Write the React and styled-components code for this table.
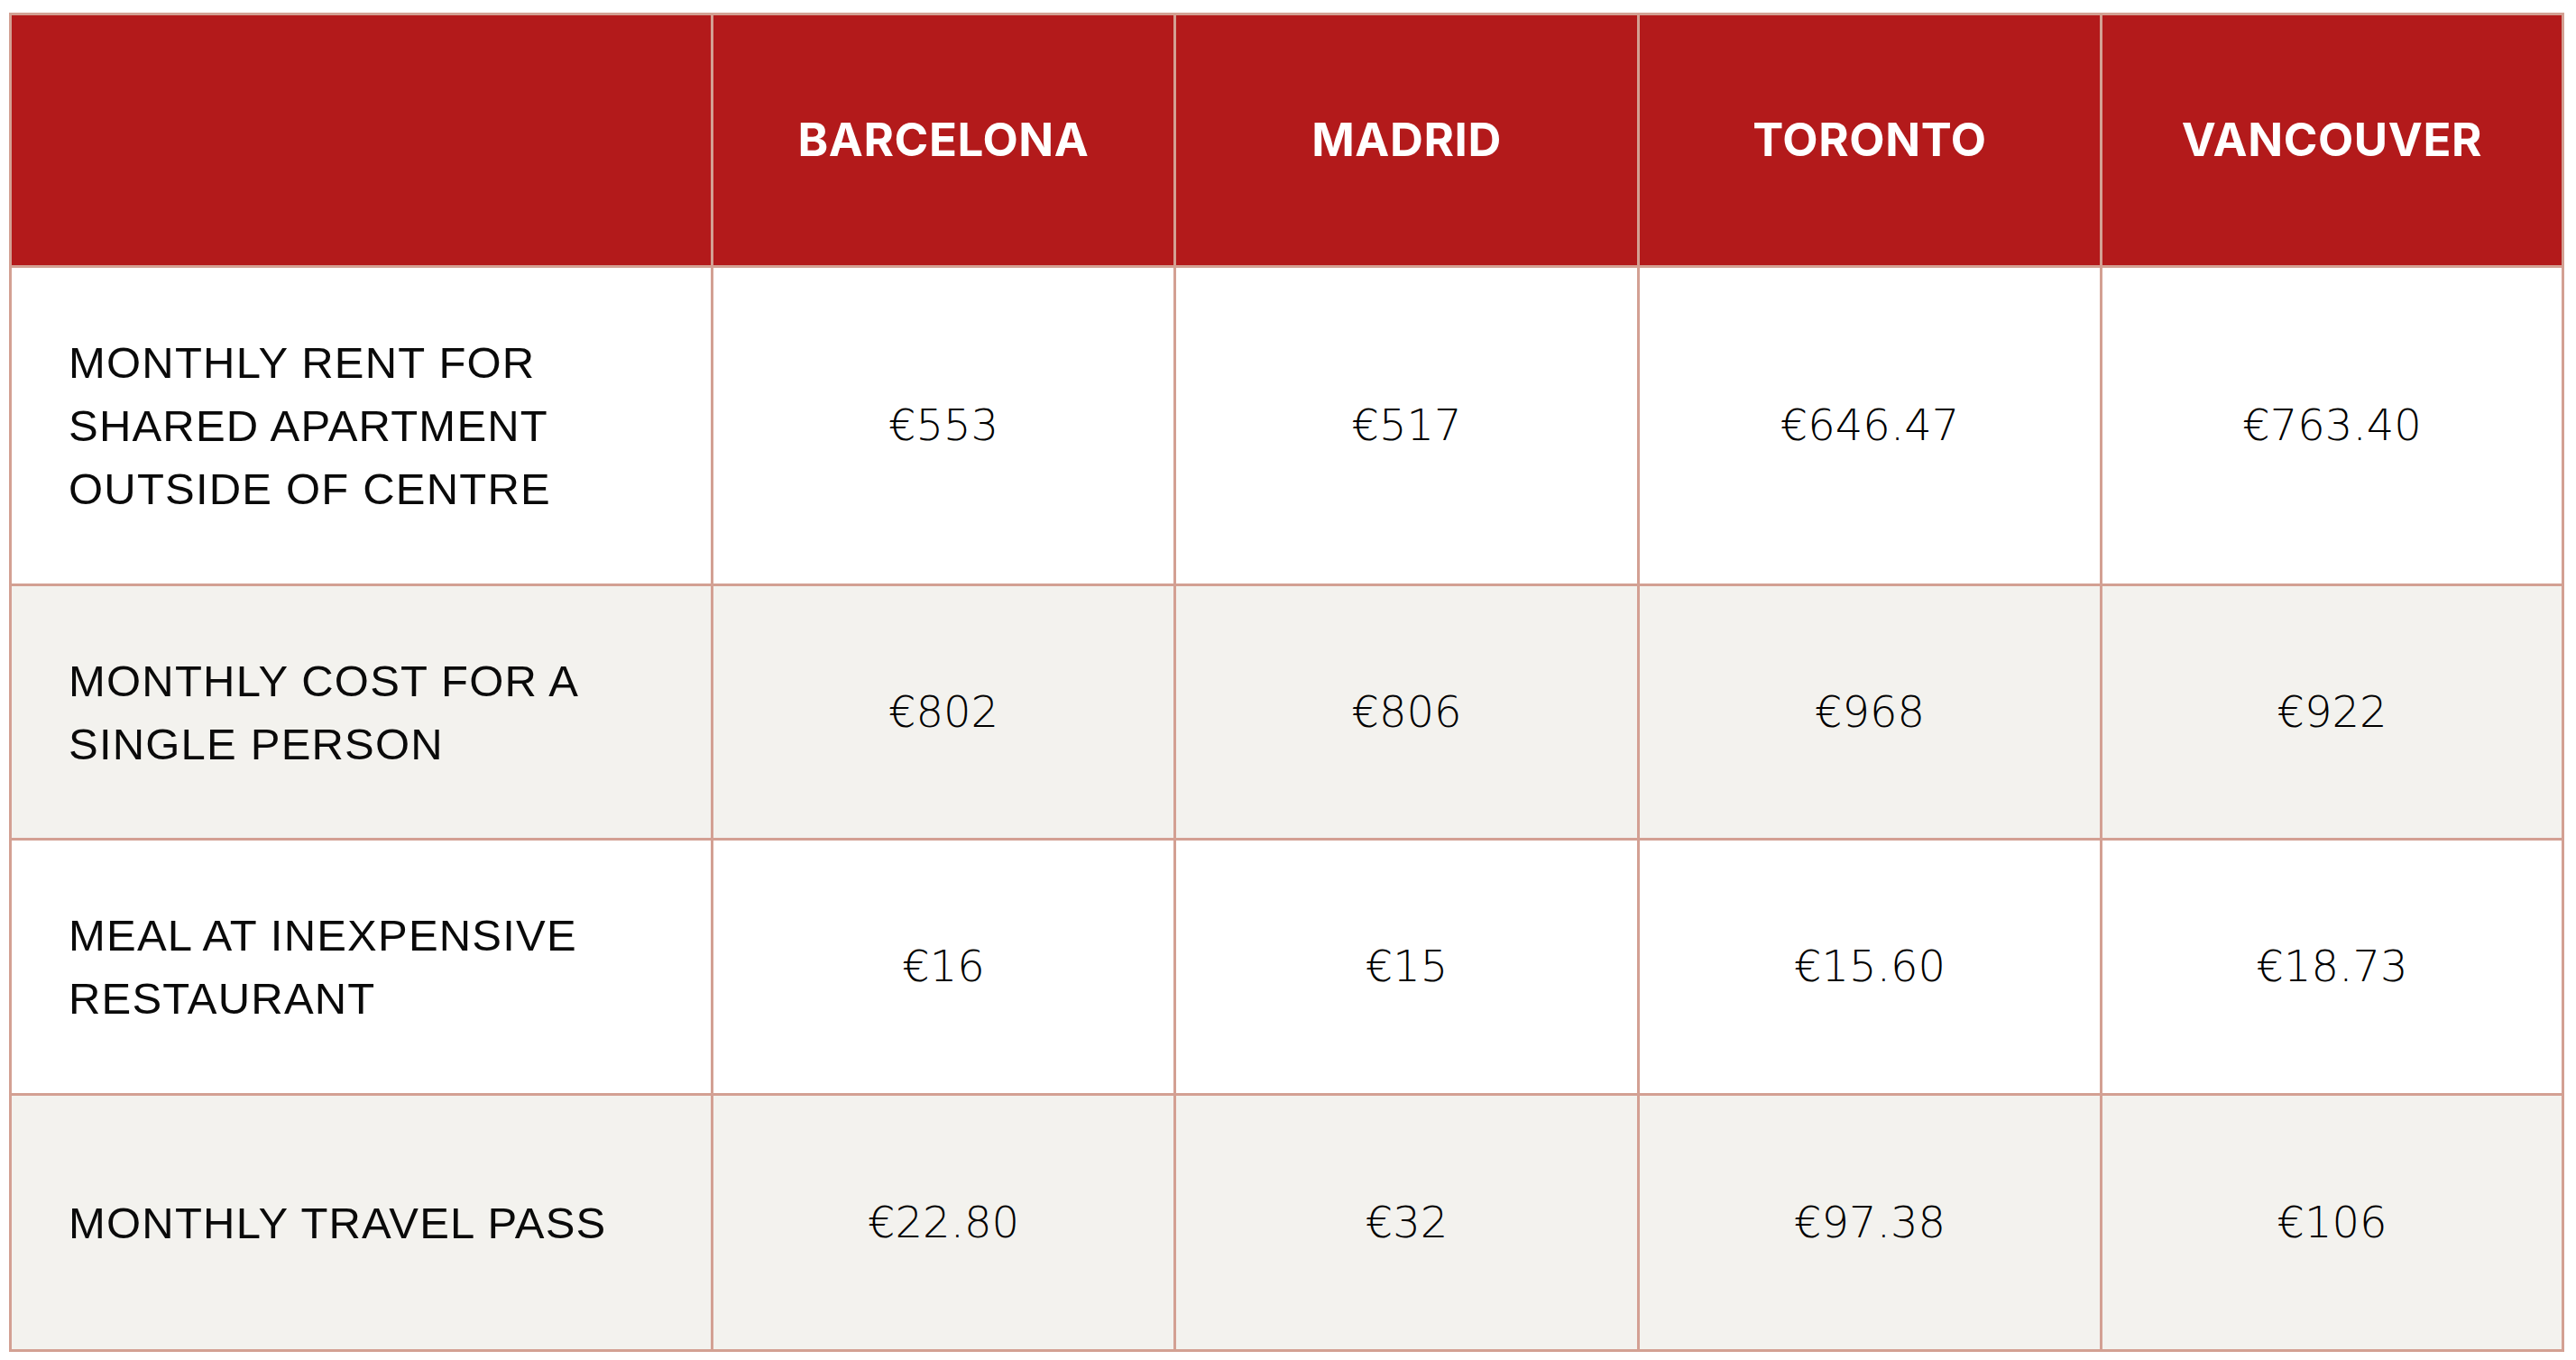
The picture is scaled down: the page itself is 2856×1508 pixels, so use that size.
import React from 'react';
import styled, { createGlobalStyle } from 'styled-components';

const cities = ['BARCELONA', 'MADRID', 'TORONTO', 'VANCOUVER'];

const rows = [
  { label: ['MONTHLY RENT FOR', 'SHARED APARTMENT', 'OUTSIDE OF CENTRE'], values: ['€553', '€517', '€646.47', '€763.40'] },
  { label: ['MONTHLY COST FOR A', 'SINGLE PERSON'], values: ['€802', '€806', '€968', '€922'], shaded: true },
  { label: ['MEAL AT INEXPENSIVE', 'RESTAURANT'], values: ['€16', '€15', '€15.60', '€18.73'] },
  { label: ['MONTHLY TRAVEL PASS'], values: ['€22.80', '€32', '€97.38', '€106'], shaded: true },
];

const GlobalStyle = createGlobalStyle`
  html, body {
    margin: 0;
    padding: 0;
    background: #ffffff;
  }
  body {
    width: 2856px;
    height: 1508px;
    overflow: hidden;
  }
`;

const Page = styled.div`
  padding: 14px 0 0 10px;
`;

const Grid = styled.div`
  display: grid;
  width: 2833px;
  grid-template-columns: 775px 510px 511px 510px 509px;
  grid-template-rows: 277px 350px 279px 280px 281px;
  gap: 3px;
  padding: 3px;
  box-sizing: border-box;
  background: #d3a093;
`;

const HeadCell = styled.div`
  background: #b31a1b;
  color: #ffffff;
  display: flex;
  align-items: center;
  justify-content: center;
  padding-bottom: 3px;
  font-family: Inter, "Liberation Sans", sans-serif;
  font-weight: 700;
  font-size: 51px;
  letter-spacing: 0.6px;
`;

const LabelCell = styled.div`
  background: ${p => (p.$shaded ? '#f3f2ee' : '#ffffff')};
  display: flex;
  align-items: center;
  padding-left: 63px;
  font-family: "Liberation Sans", Arial, sans-serif;
  font-size: 49px;
  line-height: 70px;
  letter-spacing: 1.2px;
  color: #0a0a0a;
`;

const ValueCell = styled.div`
  background: ${p => (p.$shaded ? '#f3f2ee' : '#ffffff')};
  display: flex;
  align-items: center;
  justify-content: center;
  padding-bottom: 2px;
  font-family: "DejaVu Sans", "Liberation Sans", sans-serif;
  font-weight: 200;
  font-size: 48px;
  color: #000000;
`;

export default function App() {
  return (
    <Page>
      <GlobalStyle />
      <Grid>
        <HeadCell />
        {cities.map(c => (
          <HeadCell key={c}>{c}</HeadCell>
        ))}
        {rows.map((r, i) => (
          <React.Fragment key={i}>
            <LabelCell $shaded={r.shaded}>
              <div>
                {r.label.map((l, j) => (
                  <div key={j}>{l}</div>
                ))}
              </div>
            </LabelCell>
            {r.values.map((v, j) => (
              <ValueCell key={j} $shaded={r.shaded}>{v}</ValueCell>
            ))}
          </React.Fragment>
        ))}
      </Grid>
    </Page>
  );
}
